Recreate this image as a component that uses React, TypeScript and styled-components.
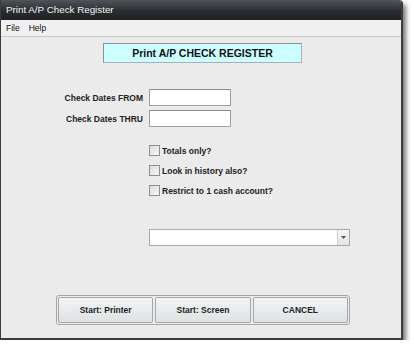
import React from "react";
import styled, { createGlobalStyle } from "styled-components";

const GlobalStyle = createGlobalStyle`
  html, body {
    margin: 0;
    padding: 0;
    background: #ffffff;
  }
  body {
    font-family: "Liberation Sans", Arial, sans-serif;
  }
`;

const Window = styled.div`
  width: 400px;
  height: 338px;
  border: 2px solid #3c3c3c;
  border-left-width: 1px;
  border-top-width: 0;
  background: #ebebeb;
  display: flex;
  flex-direction: column;
  box-shadow: 3px 4px 5px rgba(0, 0, 0, 0.55);
  border-top-right-radius: 4px;
  overflow: hidden;
`;

const TitleBar = styled.div`
  height: 20px;
  flex: none;
  background: linear-gradient(#50545a, #2a2c30 55%, #1f2023);
  color: #f4f4f4;
  font-size: 9.8px;
  line-height: 20px;
  padding-left: 5px;
`;

const MenuBar = styled.div`
  height: 16px;
  flex: none;
  display: flex;
  align-items: center;
  gap: 9px;
  padding-left: 5px;
  font-size: 8.5px;
  color: #111;
  background: #f0f0f0;
  border-bottom: 1px solid #c8c8c8;
`;

const Body = styled.div`
  flex: 1;
  display: flex;
  flex-direction: column;
  padding-top: 6px;
`;

const Banner = styled.div`
  margin-left: 102px;
  width: 197px;
  height: 18px;
  background: #ccfeff;
  border: 1px solid #a9b0b3;
  border-top-color: #8c9294;
  border-left-color: #8c9294;
  font-size: 10.5px;
  font-weight: bold;
  color: #111;
  text-align: center;
  line-height: 18px;
`;

const DateGrid = styled.div`
  margin-top: 26px;
  display: grid;
  grid-template-columns: 142px 82px;
  column-gap: 6px;
  row-gap: 4px;
  align-items: center;
`;

const FieldLabel = styled.div`
  text-align: right;
  font-size: 8.5px;
  font-weight: bold;
  color: #222;
`;

const TextInput = styled.div`
  height: 15px;
  background: #fff;
  border: 1px solid #a0a0a0;
  border-top-color: #8a8a8a;
`;

const Checks = styled.div`
  margin-top: 18px;
  margin-left: 148px;
  display: flex;
  flex-direction: column;
  gap: 9px;
`;

const CheckRow = styled.div`
  display: flex;
  align-items: center;
  gap: 2px;
  height: 11px;
  font-size: 8.5px;
  font-weight: bold;
  color: #222;
`;

const Box = styled.span`
  width: 9px;
  height: 9px;
  border: 1px solid #8f8f8f;
  background: linear-gradient(135deg, #dcdcdc, #f6f6f6);
`;

const Combo = styled.div`
  margin-top: 33px;
  margin-left: 148px;
  width: 199px;
  height: 15px;
  display: flex;
  background: #fff;
  border: 1px solid #a8a8a8;
`;

const ComboField = styled.div`
  flex: 1;
`;

const ComboArrow = styled.div`
  width: 11px;
  border-left: 1px solid #cfcfcf;
  background: linear-gradient(#f4f6f8, #e1e5ea);
  display: flex;
  align-items: center;
  justify-content: center;
`;

const ButtonPanel = styled.div`
  margin-top: 49px;
  margin-left: 55px;
  width: 290px;
  height: 26px;
  border: 1px solid #a6a6a6;
  border-radius: 3px;
  padding: 1px;
  display: flex;
  gap: 2px;
`;

const PanelButton = styled.div`
  flex: 1;
  display: flex;
  align-items: center;
  justify-content: center;
  border: 1px solid #a2a8ad;
  border-radius: 2px;
  background: linear-gradient(#f1f3f4, #dfe2e4);
  font-size: 8.5px;
  font-weight: bold;
  color: #222;
`;

export default function App() {
  return (
    <>
      <GlobalStyle />
      <Window>
        <TitleBar>Print A/P Check Register</TitleBar>
        <MenuBar>
          <span>File</span>
          <span>Help</span>
        </MenuBar>
        <Body>
          <Banner>Print A/P CHECK REGISTER</Banner>
          <DateGrid>
            <FieldLabel>Check Dates FROM</FieldLabel>
            <TextInput />
            <FieldLabel>Check Dates THRU</FieldLabel>
            <TextInput />
          </DateGrid>
          <Checks>
            <CheckRow>
              <Box />
              Totals only?
            </CheckRow>
            <CheckRow>
              <Box />
              Look in history also?
            </CheckRow>
            <CheckRow>
              <Box />
              Restrict to 1 cash account?
            </CheckRow>
          </Checks>
          <Combo>
            <ComboField />
            <ComboArrow>
              <svg width="5" height="3" viewBox="0 0 5 3">
                <path d="M0 0h5L2.5 3z" fill="#555" />
              </svg>
            </ComboArrow>
          </Combo>
          <ButtonPanel>
            <PanelButton>Start: Printer</PanelButton>
            <PanelButton>Start: Screen</PanelButton>
            <PanelButton>CANCEL</PanelButton>
          </ButtonPanel>
        </Body>
      </Window>
    </>
  );
}
